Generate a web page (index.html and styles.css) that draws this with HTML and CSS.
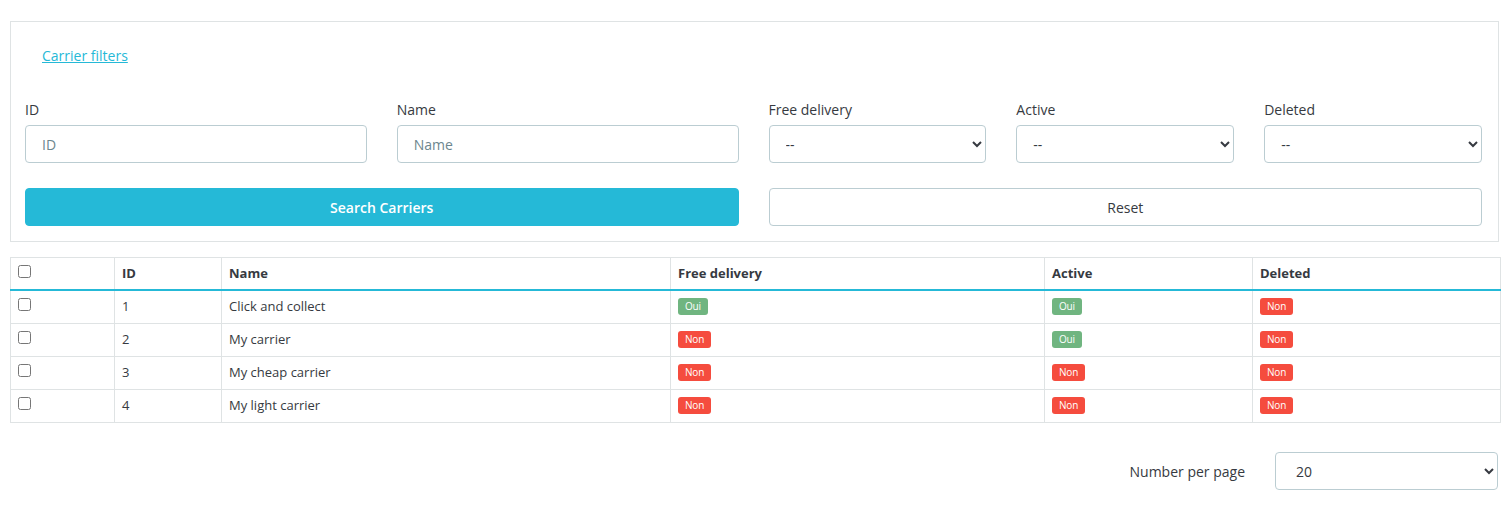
FILE: index.html
```html
<!DOCTYPE html>
<html lang="en">
<head>
<meta charset="utf-8">
<title>Carriers</title>
<link rel="stylesheet" href="styles.css">
</head>
<body>
<div class="page">
  <section class="filters">
    <div class="filters-head"><a href="#" class="filters-link">Carrier filters</a></div>
    <div class="filters-grid">
      <div class="half half-2">
        <div class="field">
          <label class="field-label">ID</label>
          <input class="control" type="text" placeholder="ID">
        </div>
        <div class="field">
          <label class="field-label">Name</label>
          <input class="control" type="text" placeholder="Name">
        </div>
      </div>
      <div class="half half-3">
        <div class="field">
          <label class="field-label">Free delivery</label>
          <select class="control select"><option>--</option></select>
        </div>
        <div class="field">
          <label class="field-label">Active</label>
          <select class="control select"><option>--</option></select>
        </div>
        <div class="field">
          <label class="field-label">Deleted</label>
          <select class="control select"><option>--</option></select>
        </div>
      </div>
      <button class="btn btn-primary" type="button">Search Carriers</button>
      <button class="btn btn-outline" type="button">Reset</button>
    </div>
  </section>

  <table class="grid">
    <colgroup>
      <col class="c-check"><col class="c-id"><col class="c-name"><col class="c-free"><col class="c-active"><col class="c-deleted">
    </colgroup>
    <thead>
      <tr>
        <th><input type="checkbox" class="check"></th>
        <th>ID</th>
        <th>Name</th>
        <th>Free delivery</th>
        <th>Active</th>
        <th>Deleted</th>
      </tr>
    </thead>
    <tbody>
      <tr>
        <td><input type="checkbox" class="check"></td>
        <td>1</td>
        <td>Click and collect</td>
        <td><span class="badge yes">Oui</span></td>
        <td><span class="badge yes">Oui</span></td>
        <td><span class="badge no">Non</span></td>
      </tr>
      <tr>
        <td><input type="checkbox" class="check"></td>
        <td>2</td>
        <td>My carrier</td>
        <td><span class="badge no">Non</span></td>
        <td><span class="badge yes">Oui</span></td>
        <td><span class="badge no">Non</span></td>
      </tr>
      <tr>
        <td><input type="checkbox" class="check"></td>
        <td>3</td>
        <td>My cheap carrier</td>
        <td><span class="badge no">Non</span></td>
        <td><span class="badge no">Non</span></td>
        <td><span class="badge no">Non</span></td>
      </tr>
      <tr>
        <td><input type="checkbox" class="check"></td>
        <td>4</td>
        <td>My light carrier</td>
        <td><span class="badge no">Non</span></td>
        <td><span class="badge no">Non</span></td>
        <td><span class="badge no">Non</span></td>
      </tr>
    </tbody>
  </table>

  <div class="pager">
    <span class="pager-label">Number per page</span>
    <select class="control select pager-select"><option>20</option></select>
  </div>
</div>
</body>
</html>
```

FILE: styles.css
```css
* { box-sizing: border-box; }
html, body { margin: 0; background: #fff; }
body {
  font-family: "Open Sans", "Noto Sans", sans-serif;
  color: #363a41;
  font-size: 14px;
}
.page { padding: 21px 5px 0 10px; }

.filters {
  border: 1px solid #dfe3e4;
  padding: 24px 16px 15px 14px;
}
.filters-head { padding-left: 17px; height: 20px; line-height: 20px; }
.filters-link { color: #25b9d7; text-decoration: underline; font-size: 14px; }

.filters-grid {
  margin-top: 34px;
  display: grid;
  grid-template-columns: 1fr 1fr;
  column-gap: 30px;
  row-gap: 25px;
}
.half { display: grid; column-gap: 30px; }
.half-2 { grid-template-columns: 1fr 1fr; }
.half-3 { grid-template-columns: 1fr 1fr 1fr; }
.field { display: flex; flex-direction: column; }
.field-label { line-height: 20px; height: 20px; margin-bottom: 5px; font-size: 14px; color: #363a41; }

.control {
  height: 38px;
  border: 1px solid #bbcdd2;
  border-radius: 4px;
  font-family: "Open Sans", "Noto Sans", sans-serif;
  font-size: 14px;
  color: #363a41;
  padding: 0 16px;
  background: #fff;
  width: 100%;
}
.control::placeholder { color: #6c868e; }
.select { padding: 0 12px; }

.btn {
  height: 38px;
  border-radius: 4px;
  font-family: "Open Sans", "Noto Sans", sans-serif;
  font-size: 14px;
  cursor: pointer;
}
.btn-primary { background: #25b9d7; border: 1px solid #25b9d7; color: #fff; font-weight: 600; }
.btn-outline { background: #fff; border: 1px solid #bbcdd2; color: #363a41; }

.grid {
  margin-top: 15px;
  width: 100%;
  border-collapse: collapse;
  table-layout: fixed;
  font-size: 13px;
  border: 1px solid #dfe3e4;
}
.c-check { width: 104px; }
.c-id { width: 107px; }
.c-name { width: 449px; }
.c-free { width: 374px; }
.c-active { width: 208px; }
.c-deleted { width: 248px; }

.grid th, .grid td {
  border: 1px solid #dfe3e4;
  padding: 7px 7px 8px;
  line-height: 17px;
  text-align: left;
  vertical-align: top;
}
.grid th { font-weight: 700; color: #363a41; }
.grid thead th { border-bottom: 2px solid #25b9d7; padding-bottom: 7px; }
.grid td { color: #363a41; }
.check { margin: 0; width: 13px; height: 13px; display: block; }

.badge {
  display: inline-block;
  vertical-align: top;
  font-size: 10px;
  line-height: 17px;
  height: 17px;
  padding: 0 7px;
  border-radius: 3px;
  color: #fff;
  letter-spacing: -0.2px;
}
.badge.yes { background: #70b580; }
.badge.no { background: #f54c3e; }

.pager {
  margin-top: 29px;
  display: flex;
  justify-content: flex-end;
  align-items: center;
  gap: 30px;
  padding-right: 1px;
}
.pager-label { font-size: 14px; color: #363a41; }
.pager-select { width: 223px; padding: 0 16px; }
```
